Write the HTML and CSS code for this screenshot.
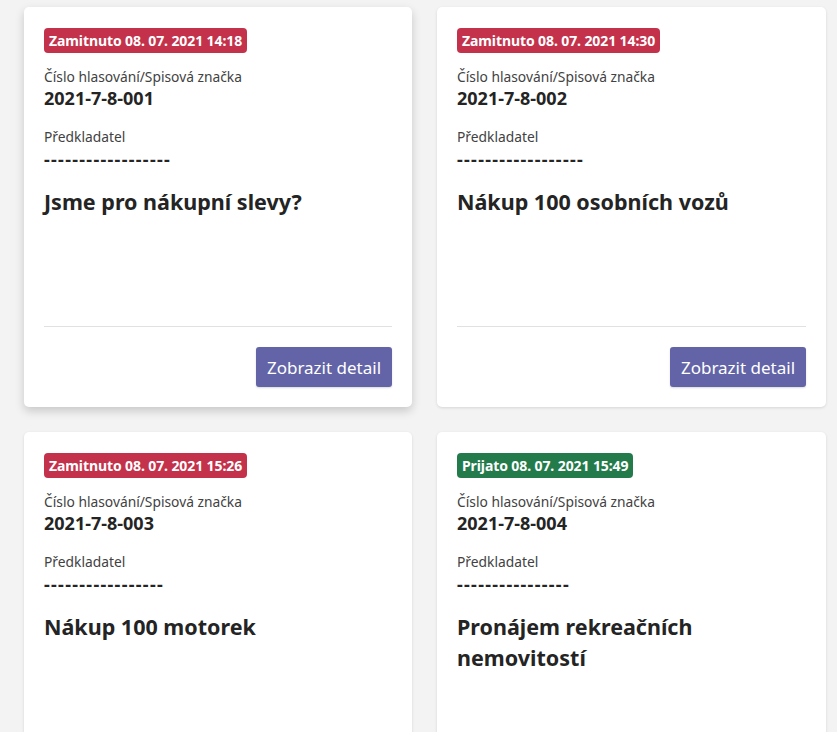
FILE: index.html
```html
<!DOCTYPE html>
<html lang="cs">
<head>
    <meta charset="UTF-8">
    <meta name="viewport" content="width=device-width, initial-scale=1.0">
    <title>Hlasování</title>
    <link rel="stylesheet" href="styles.css">
</head>
<body>
    <div class="grid">
        <div class="card card-hover">
            <span class="badge badge-red">Zamitnuto 08. 07. 2021 14:18</span>
            <div class="label">Číslo hlasování/Spisová značka</div>
            <div class="value">2021-7-8-001</div>
            <div class="label label-gap">Předkladatel</div>
            <div class="value dashes">------------------</div>
            <h2 class="title">Jsme pro nákupní slevy?</h2>
            <div class="footer">
                <button class="btn">Zobrazit detail</button>
            </div>
        </div>

        <div class="card">
            <span class="badge badge-red">Zamitnuto 08. 07. 2021 14:30</span>
            <div class="label">Číslo hlasování/Spisová značka</div>
            <div class="value">2021-7-8-002</div>
            <div class="label label-gap">Předkladatel</div>
            <div class="value dashes">------------------</div>
            <h2 class="title">Nákup 100 osobních vozů</h2>
            <div class="footer">
                <button class="btn">Zobrazit detail</button>
            </div>
        </div>

        <div class="card">
            <span class="badge badge-red">Zamitnuto 08. 07. 2021 15:26</span>
            <div class="label">Číslo hlasování/Spisová značka</div>
            <div class="value">2021-7-8-003</div>
            <div class="label label-gap">Předkladatel</div>
            <div class="value dashes">-----------------</div>
            <h2 class="title">Nákup 100 motorek</h2>
            <div class="footer">
                <button class="btn">Zobrazit detail</button>
            </div>
        </div>

        <div class="card">
            <span class="badge badge-green">Prijato 08. 07. 2021 15:49</span>
            <div class="label">Číslo hlasování/Spisová značka</div>
            <div class="value">2021-7-8-004</div>
            <div class="label label-gap">Předkladatel</div>
            <div class="value dashes">----------------</div>
            <h2 class="title">Pronájem rekreačních nemovitostí</h2>
            <div class="footer">
                <button class="btn">Zobrazit detail</button>
            </div>
        </div>
    </div>
</body>
</html>
```

FILE: styles.css
```css
body {
    font-family: "Noto Sans", "Open Sans", sans-serif;
    background-color: #f3f3f3;
    color: #242424;
    margin: 0;
}
.grid {
    display: grid;
    grid-template-columns: 388px 389px;
    gap: 25px;
    padding: 7px 11px 20px 24px;
}
.card {
    background: white;
    border-radius: 5px;
    box-shadow: 0 1px 3px rgba(0, 0, 0, 0.12);
    height: 400px;
    box-sizing: border-box;
    padding: 21px 20px 20px;
    display: flex;
    flex-direction: column;
    align-items: flex-start;
}
.card-hover {
    box-shadow: 0 4px 10px rgba(0, 0, 0, 0.18);
}
.badge {
    color: white;
    font-weight: bold;
    font-size: 14px;
    line-height: 25px;
    height: 25px;
    padding: 0 5px;
    border-radius: 4px;
    letter-spacing: -0.1px;
}
.badge-red {
    background: #c4314b;
}
.badge-green {
    background: #237b4b;
}
.label {
    font-size: 13.8px;
    line-height: 20px;
    color: #424242;
    margin-top: 14px;
}
.label-gap {
    margin-top: 18px;
}
.value {
    font-size: 18px;
    font-weight: bold;
    line-height: 22px;
}
.dashes {
    letter-spacing: 1.3px;
    line-height: 24px;
}
.title {
    font-size: 21.5px;
    line-height: 31px;
    margin: 15px 0 0;
    font-weight: bold;
}
.footer {
    margin-top: auto;
    align-self: stretch;
    border-top: 1px solid #e1e1e1;
    padding-top: 20px;
    display: flex;
    justify-content: flex-end;
}
.btn {
    background: #6264a7;
    color: white;
    border: none;
    border-radius: 3px;
    height: 40px;
    width: 136px;
    font-family: inherit;
    font-size: 17px;
    cursor: pointer;
    box-shadow: 0 1px 2px rgba(0, 0, 0, 0.15);
}
.btn:hover {
    background: #585a96;
}
```
